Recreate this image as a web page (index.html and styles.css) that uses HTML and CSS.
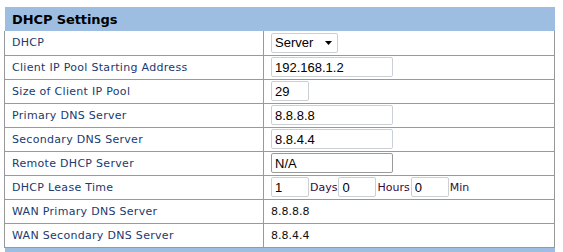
FILE: index.html
```html
<!DOCTYPE html>
<html>
<head>
<meta charset="utf-8">
<title>DHCP Settings</title>
<link rel="stylesheet" href="styles.css">
</head>
<body>
<div class="panel">
  <div class="panel-title">DHCP Settings</div>
  <table class="settings">
    <colgroup><col class="col-label"><col></colgroup>
    <tr>
      <td class="label">DHCP</td>
      <td class="value"><span class="select-wrap"><select class="select"><option>Server</option></select><svg class="select-arrow" width="7" height="4" viewBox="0 0 7 4"><polygon points="0,0 7,0 3.5,4" fill="#000"/></svg></span></td>
    </tr>
    <tr>
      <td class="label">Client IP Pool Starting Address</td>
      <td class="value"><input class="text-input" type="text" value="192.168.1.2"></td>
    </tr>
    <tr>
      <td class="label">Size of Client IP Pool</td>
      <td class="value"><input class="text-input short" type="text" value="29"></td>
    </tr>
    <tr>
      <td class="label">Primary DNS Server</td>
      <td class="value"><input class="text-input" type="text" value="8.8.8.8"></td>
    </tr>
    <tr>
      <td class="label">Secondary DNS Server</td>
      <td class="value"><input class="text-input" type="text" value="8.8.4.4"></td>
    </tr>
    <tr>
      <td class="label">Remote DHCP Server</td>
      <td class="value"><input class="text-input dark" type="text" value="N/A"></td>
    </tr>
    <tr>
      <td class="label">DHCP Lease Time</td>
      <td class="value"><div class="lease"><input class="text-input short" type="text" value="1"><span class="unit">Days</span><input class="text-input short" type="text" value="0"><span class="unit">Hours</span><input class="text-input short" type="text" value="0"><span class="unit">Min</span></div></td>
    </tr>
    <tr>
      <td class="label">WAN Primary DNS Server</td>
      <td class="value plain">8.8.8.8</td>
    </tr>
    <tr>
      <td class="label">WAN Secondary DNS Server</td>
      <td class="value plain">8.8.4.4</td>
    </tr>
  </table>
  <div class="panel-foot"></div>
</div>
</body>
</html>
```
FILE: styles.css
```css
body {
  margin: 0;
  background: #fff;
  font-family: "DejaVu Sans", Verdana, sans-serif;
  font-size: 11px;
}

.panel {
  margin: 7px 0 0 4px;
  width: 551px;
}

.panel-title {
  margin-left: 1px;
  height: 24px;
  box-sizing: border-box;
  padding: 2px 0 0 7px;
  line-height: 22px;
  background: #9dbee1;
  color: #000;
  font-weight: bold;
  font-size: 13px;
  letter-spacing: -0.1px;
}

.settings {
  width: 551px;
  border-collapse: collapse;
  table-layout: fixed;
  border-left: 1px solid #999;
  border-right: 1px solid #999;
  border-bottom: 1px solid #999;
}

.col-label {
  width: 259px;
}

.settings tr {
  height: 24px;
}

.settings td {
  border: 1px solid #999;
  padding: 0 7px;
  vertical-align: middle;
}

.settings tr:first-child td {
  border-top: none;
}

.label {
  color: #203a70;
  letter-spacing: 0.3px;
}

.plain {
  color: #111;
}

.text-input {
  box-sizing: border-box;
  width: 122px;
  height: 20px;
  margin: 0;
  padding: 0 3px;
  border: 1px solid #cbd0d6;
  border-radius: 2px;
  font: 13px "Liberation Sans", Arial, sans-serif;
  color: #000;
  background: #fff;
  vertical-align: middle;
  outline: none;
}

.text-input.short {
  width: 38px;
}

.text-input.dark {
  border-color: #9a9a9a;
}

.select-wrap {
  position: relative;
  display: inline-block;
  vertical-align: middle;
}

.select {
  -webkit-appearance: none;
  appearance: none;
  box-sizing: border-box;
  width: 67px;
  height: 20px;
  margin: 0;
  padding: 0 3px;
  border: 1px solid #cbd0d6;
  border-radius: 2px;
  background: #fff;
  font: 13px "Liberation Sans", Arial, sans-serif;
  color: #000;
  display: block;
}

.select-arrow {
  position: absolute;
  left: 54px;
  top: 8px;
  pointer-events: none;
}

.lease {
  display: flex;
  align-items: center;
}

.unit {
  padding: 0 1px;
  color: #3a0a3a;
}

.panel-foot {
  margin-left: 1px;
  height: 10px;
  background: #9dbee1;
}
```
